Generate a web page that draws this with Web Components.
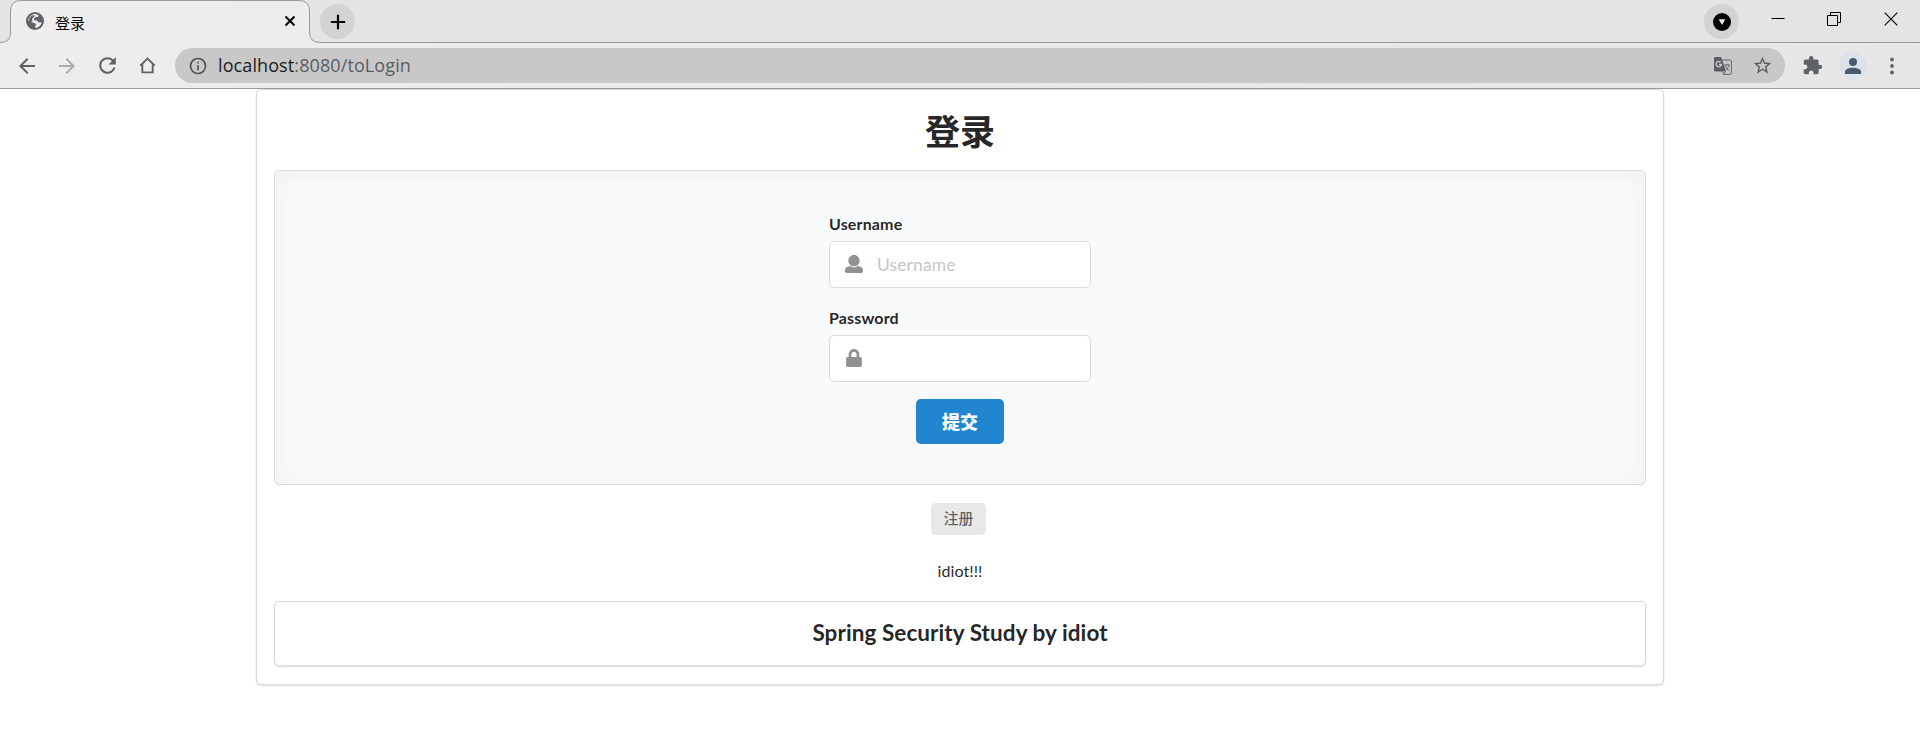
<!DOCTYPE html>
<html lang="zh-CN">
<head>
<meta charset="utf-8">
<title>登录</title>
<style>
html,body{margin:0;padding:0;height:100%;overflow:hidden;background:#fff}
body{font-family:Lato,"Noto Sans CJK SC",sans-serif;color:rgba(0,0,0,.87)}
</style>
</head>
<body>
<browser-window>
  <tab-strip slot="tabs">登录</tab-strip>
  <tool-bar slot="toolbar"><span slot="host">localhost</span>:8080/toLogin</tool-bar>
  <login-page></login-page>
</browser-window>
<script>
const define = (name, html) => customElements.define(name, class extends HTMLElement {
  constructor() {
    super();
    const t = document.createElement('template');
    t.innerHTML = html;
    this.attachShadow({ mode: 'open' }).append(t.content.cloneNode(true));
  }
});

const ICONS = {
  globe: ['0 0 18 18', '<circle cx="9" cy="9" r="9"/><path d="M7.800 2C10 1.800 11.800 2.600 12.800 3.400L11.800 5H9.600L7.600 7.200L8.600 8.600H11.200L12.400 10.400L14.600 10.200L15.800 10.600C15 13.600 12.400 15.800 9.400 16L9.200 14L10.200 12.200L8.400 11L5.800 10.600L4.200 9L2.200 8.400C2.400 5.600 4.600 3 7.800 2Z" fill="#ececec"/><path d="M3.200 6.500L5.500 3.600L8.800 3.300L8 5.200L5.800 6.800L6.600 9.200L5.500 10L3 8.600Z"/>'],
  close: ['0 0 12 12', '<path d="M1.5 1.5l9 9m0-9l-9 9" fill="none" stroke="currentColor" stroke-width="2"/>'],
  plus: ['0 0 16 16', '<path d="M8 .8v14.4M.8 8h14.4" fill="none" stroke="currentColor" stroke-width="2.2"/>'],
  search: ['0 0 18 18', '<circle cx="9" cy="9" r="9"/><path d="M5.700 6.300h6.600L9 12z" fill="#e8e8e8"/>'],
  min: ['0 0 14 14', '<path d="M.5 7.5h13" fill="none" stroke="currentColor"/>'],
  restore: ['0 0 14 14', '<path d="M.5 3.5h10v10H.5zM3.500 3V.5h10v10H11" fill="none" stroke="currentColor"/>'],
  x: ['0 0 14 14', '<path d="M.7.7l12.600 12.600m0-12.600L.7 13.300" fill="none" stroke="currentColor" stroke-width="1.100"/>'],
  back: ['0 0 24 24', '<path d="M20 11H7.830l5.590-5.590L12 4l-8 8 8 8 1.410-1.410L7.830 13H20v-2z"/>'],
  forward: ['0 0 24 24', '<path d="M12 4l-1.410 1.410L16.170 11H4v2h12.170l-5.580 5.590L12 20l8-8z"/>'],
  reload: ['0 0 24 24', '<path d="M17.650 6.350A7.958 7.958 0 0 0 12 4a8 8 0 1 0 7.730 10h-2.080A6 6 0 1 1 12 6c1.660 0 3.140.69 4.220 1.780L13 11h7V4l-2.350 2.350z"/>'],
  home: ['0 0 24 24', '<path d="M4.500 12.200L12 4.700l7.500 7.500M6.600 11v8.200h10.800V11" fill="none" stroke="currentColor" stroke-width="2"/>'],
  info: ['0 0 24 24', '<path d="M11 17h2v-6h-2v6zm1-15a10 10 0 1 0 0 20 10 10 0 0 0 0-20zm0 18a8 8 0 1 1 0-16 8 8 0 0 1 0 16zM11 9h2V7h-2v2z"/>'],
  translate: ['0 0 18 18', '<path d="M8 3h8.300c.6 0 1.100.5 1.100 1.100v12.200c0 .6-.5 1.100-1.100 1.100H9.500L8.500 14.500" fill="none" stroke="currentColor" stroke-width=".9"/><path d="M1.300 0H7l1.200 3 3.800 11.500H1.300A1.300 1.300 0 0 1 0 13.200V1.300C0 .6.6 0 1.300 0z"/><path d="M6.700 5.300A2.700 2.700 0 1 0 7.400 7.500H4.800" fill="none" stroke="#c8c8c8" stroke-width="1.400"/><path d="M10 8h6M13 6.800V8m2 0c-.5 2.300-2 4-3.500 5m-.2-4c.8 2 2.200 3.500 4 4.600M9.500 17l2.500-2.600" fill="none" stroke="currentColor" stroke-width=".9"/>'],
  star: ['0 0 24 24', '<path d="M22 9.240l-7.190-.62L12 2 9.190 8.630 2 9.240l5.460 4.730L5.820 21 12 17.270 18.180 21l-1.630-7.030L22 9.240zM12 15.400l-3.760 2.270 1-4.280-3.320-2.880 4.380-.38L12 6.100l1.710 4.040 4.380.38-3.320 2.880 1 4.280L12 15.400z"/>'],
  puzzle: ['0 0 24 24', '<path d="M20.500 11H19V7c0-1.100-.9-2-2-2h-4V3.500a2.500 2.500 0 0 0-5 0V5H4c-1.100 0-1.990.9-1.990 2v3.800H3.500c1.490 0 2.700 1.210 2.700 2.700s-1.210 2.700-2.700 2.700H2V20c0 1.100.9 2 2 2h3.800v-1.500c0-1.490 1.210-2.700 2.700-2.700s2.700 1.210 2.700 2.700V22H17c1.100 0 2-.9 2-2v-4h1.500a2.500 2.500 0 0 0 0-5z"/>'],
  person: ['0 0 16 16', '<circle cx="8" cy="4" r="4"/><path d="M0 16v-2.200C0 11.200 4.500 9.800 8 9.800s8 1.400 8 4V16z"/>'],
  dots: ['0 0 4 18', '<circle cx="2" cy="2.500" r="1.900"/><circle cx="2" cy="9" r="1.900"/><circle cx="2" cy="15.500" r="1.900"/>'],
  user: ['0 0 512 512', '<path d="M256 0c88.366 0 160 71.634 160 160s-71.634 160-160 160S96 248.366 96 160 167.634 0 256 0zm183.283 333.821l-71.313-17.828c-74.923 53.890-165.738 41.864-223.940 0l-71.313 17.828C29.981 344.505 0 382.903 0 426.955V464c0 26.510 21.490 48 48 48h416c26.510 0 48-21.490 48-48v-37.045c0-44.052-29.981-82.450-72.717-93.134z"/>'],
  lock: ['0 0 448 512', '<path d="M400 224h-24v-72C376 68.200 307.800 0 224 0S72 68.200 72 152v72H48c-26.500 0-48 21.500-48 48v192c0 26.500 21.500 48 48 48h352c26.500 0 48-21.500 48-48V272c0-26.500-21.500-48-48-48zm-104 0H152v-72c0-39.700 32.300-72 72-72s72 32.300 72 72v72z"/>']
};
customElements.define('ui-icon', class extends HTMLElement {
  constructor() {
    super();
    this.attachShadow({ mode: 'open' });
  }
  connectedCallback() {
    const [box, body] = ICONS[this.getAttribute('name')];
    const w = this.getAttribute('w'), h = this.getAttribute('h') || w;
    this.shadowRoot.innerHTML = `<style>:host{display:block;flex:none;width:${w}px;height:${h}px}svg{display:block;width:100%;height:100%}</style><svg viewBox="${box}" fill="currentColor">${body}</svg>`;
  }
});

define('browser-window', `<style>
:host{display:flex;flex-direction:column;width:1920px;height:731px;background:#fff}
header{flex:none;height:88px;border-bottom:1px solid #999;background:linear-gradient(160deg,#eee,#e6e6e6)}
</style><header><slot name="tabs"></slot><slot name="toolbar"></slot></header><slot></slot>`);

define('tab-strip', `<style>
:host{display:grid;height:43px;font:15px/22px "Noto Sans CJK SC",sans-serif;color:#000}
.shape,.row{grid-area:1/1}
.shape{display:block}
.row{display:flex;height:43px;align-items:flex-start}
.tab{display:flex;align-items:center;width:270px;height:42px;padding:0 0 0 26px;box-sizing:border-box;margin-right:50px}
.title{flex:1;margin-left:11px;padding-top:3px}
.circle{display:flex;align-items:center;justify-content:center;width:35px;height:35px;border-radius:50%;background:#d3d3d3;margin-top:4px}
</style>
<svg class="shape" width="1920" height="43" viewBox="0 0 1920 43"><path d="M0 0H20Q11 1 11 10V32Q11 42.500 0 42.500ZM299 0H1920V42.500H320Q309.500 42.500 309.500 32V10Q309.500 0 299 0Z" fill="#e4e4e4"/><path d="M0 42.500C7 42.500 10.500 39 10.500 32V11Q10.500.5 21 .5H299Q309.500.5 309.500 11V32Q309.500 42.500 320 42.500H1920" fill="none" stroke="#999"/></svg>
<div class="row"><div class="tab"><ui-icon name="globe" w="18" style="color:#5f6368"></ui-icon><span class="title"><slot></slot></span></div>
<ui-icon name="close" w="12" style="margin:15px 0 0 -36px"></ui-icon>
<div class="circle" style="margin-left:24px"><ui-icon name="plus" w="16"></ui-icon></div>
<div class="circle" style="margin-left:auto"><ui-icon name="search" w="18" style="margin-top:1px"></ui-icon></div>
<ui-icon name="min" w="14" style="margin-left:32px;margin-top:11px"></ui-icon>
<ui-icon name="restore" w="14" style="margin-left:42px;margin-top:12px"></ui-icon>
<ui-icon name="x" w="14" style="margin:12px 22px 0 43px"></ui-icon></div>`);

define('tool-bar', `<style>
:host{display:flex;align-items:center;height:45px;padding:0 26px 0 15px;box-sizing:border-box;color:#5f6368}
.bar{display:flex;align-items:center;flex:1;height:35px;border-radius:18px;background:#c8c8c8;margin:0 17px 0 16px;padding:0 12px;color:#5a5d61}
.url{flex:1;margin-left:10px;font:400 18px/35px "Open Sans","Noto Sans",sans-serif;letter-spacing:.1px;white-space:pre}
.host{color:#1c1c1c}
.avatar{display:flex;align-items:center;justify-content:center;width:28px;height:28px;border-radius:50%;background:#dce1ea;color:#4c5a70;margin:0 23px 0 16px}
</style>
<ui-icon name="back" w="24"></ui-icon><ui-icon name="forward" w="24" style="margin-left:16px;color:#aaa"></ui-icon><ui-icon name="reload" w="25" style="margin-left:16px"></ui-icon><ui-icon name="home" w="23" style="margin-left:16px"></ui-icon>
<div class="bar"><ui-icon name="info" w="20" style="margin-left:1px;color:#4f5256"></ui-icon><span class="url"><span class="host"><slot name="host"></slot></span><slot></slot></span><ui-icon name="translate" w="18" style="margin-right:20px"></ui-icon><ui-icon name="star" w="21"></ui-icon></div>
<ui-icon name="puzzle" w="21"></ui-icon><div class="avatar"><ui-icon name="person" w="16"></ui-icon></div><ui-icon name="dots" w="4" h="18"></ui-icon>`);

define('ui-segment', `<style>
:host{display:block;box-sizing:border-box;border:1px solid #d9dadb;border-radius:5px;background:#fff;box-shadow:0 1px 2px rgba(34,36,38,.15)}
:host([placeholder]){display:flex;flex-direction:column;align-items:center;background:#f9fafb;box-shadow:0 2px 25px rgba(34,36,38,.05) inset}
</style><slot></slot>`);

define('ui-field', `<style>
:host{display:block;width:262px}
label{display:block;height:20px;margin-bottom:7px;font:700 16px/20px Lato,sans-serif;letter-spacing:.15px}
.input{display:flex;align-items:center;height:47px;box-sizing:border-box;border:1px solid #dadbdc;border-radius:5px;background:#fff;font-size:17.500px;letter-spacing:.1px;color:#c7c7c7}
.icon{display:flex;justify-content:center;width:47px;padding:0 0 2px 1px;box-sizing:border-box;color:#919191}
</style><label><slot name="label"></slot></label><div class="input"><span class="icon"><slot name="icon"></slot></span><slot></slot></div>`);

define('ui-button', `<style>
:host{display:flex;align-items:center;justify-content:center;width:88px;height:45px;padding-bottom:2px;box-sizing:border-box;border-radius:5px;background:#2185d0;color:#fff;font:900 18px/20px "Noto Sans CJK SC",sans-serif}
:host([label]){width:55px;height:32px;background:#e8e8e8;color:rgba(0,0,0,.6);font-size:15px;font-weight:500}
</style><slot></slot>`);

define('login-page', `<style>
:host{display:flex;justify-content:center}
.card{width:1408px;height:596px;padding:0 17px}
h1{margin:0;height:80px;font:700 35px/79px "Noto Sans CJK SC",sans-serif;text-align:center}
.box{height:315px;padding-top:43px}
.pass{margin-top:20px}
.mid{display:flex;flex-direction:column;align-items:center;height:116px;padding-top:18px;box-sizing:border-box}
.idiot{font-size:16px;line-height:20px;margin-top:26px;letter-spacing:.1px}
.foot{height:65px;text-align:center;font:700 22.500px/62px Lato,sans-serif;letter-spacing:.07px}
</style>
<ui-segment class="card"><h1>登录</h1>
<ui-segment class="box" placeholder>
<ui-field><span slot="label">Username</span><ui-icon slot="icon" name="user" w="18"></ui-icon>Username</ui-field>
<ui-field class="pass"><span slot="label">Password</span><ui-icon slot="icon" name="lock" w="16" h="18"></ui-icon></ui-field>
<ui-button style="margin-top:17px">提交</ui-button>
</ui-segment>
<div class="mid"><ui-button label style="margin-right:3px">注册</ui-button><div class="idiot">idiot!!!</div></div>
<ui-segment class="foot">Spring Security Study by idiot</ui-segment>
</ui-segment>`);
</script>
</body>
</html>
